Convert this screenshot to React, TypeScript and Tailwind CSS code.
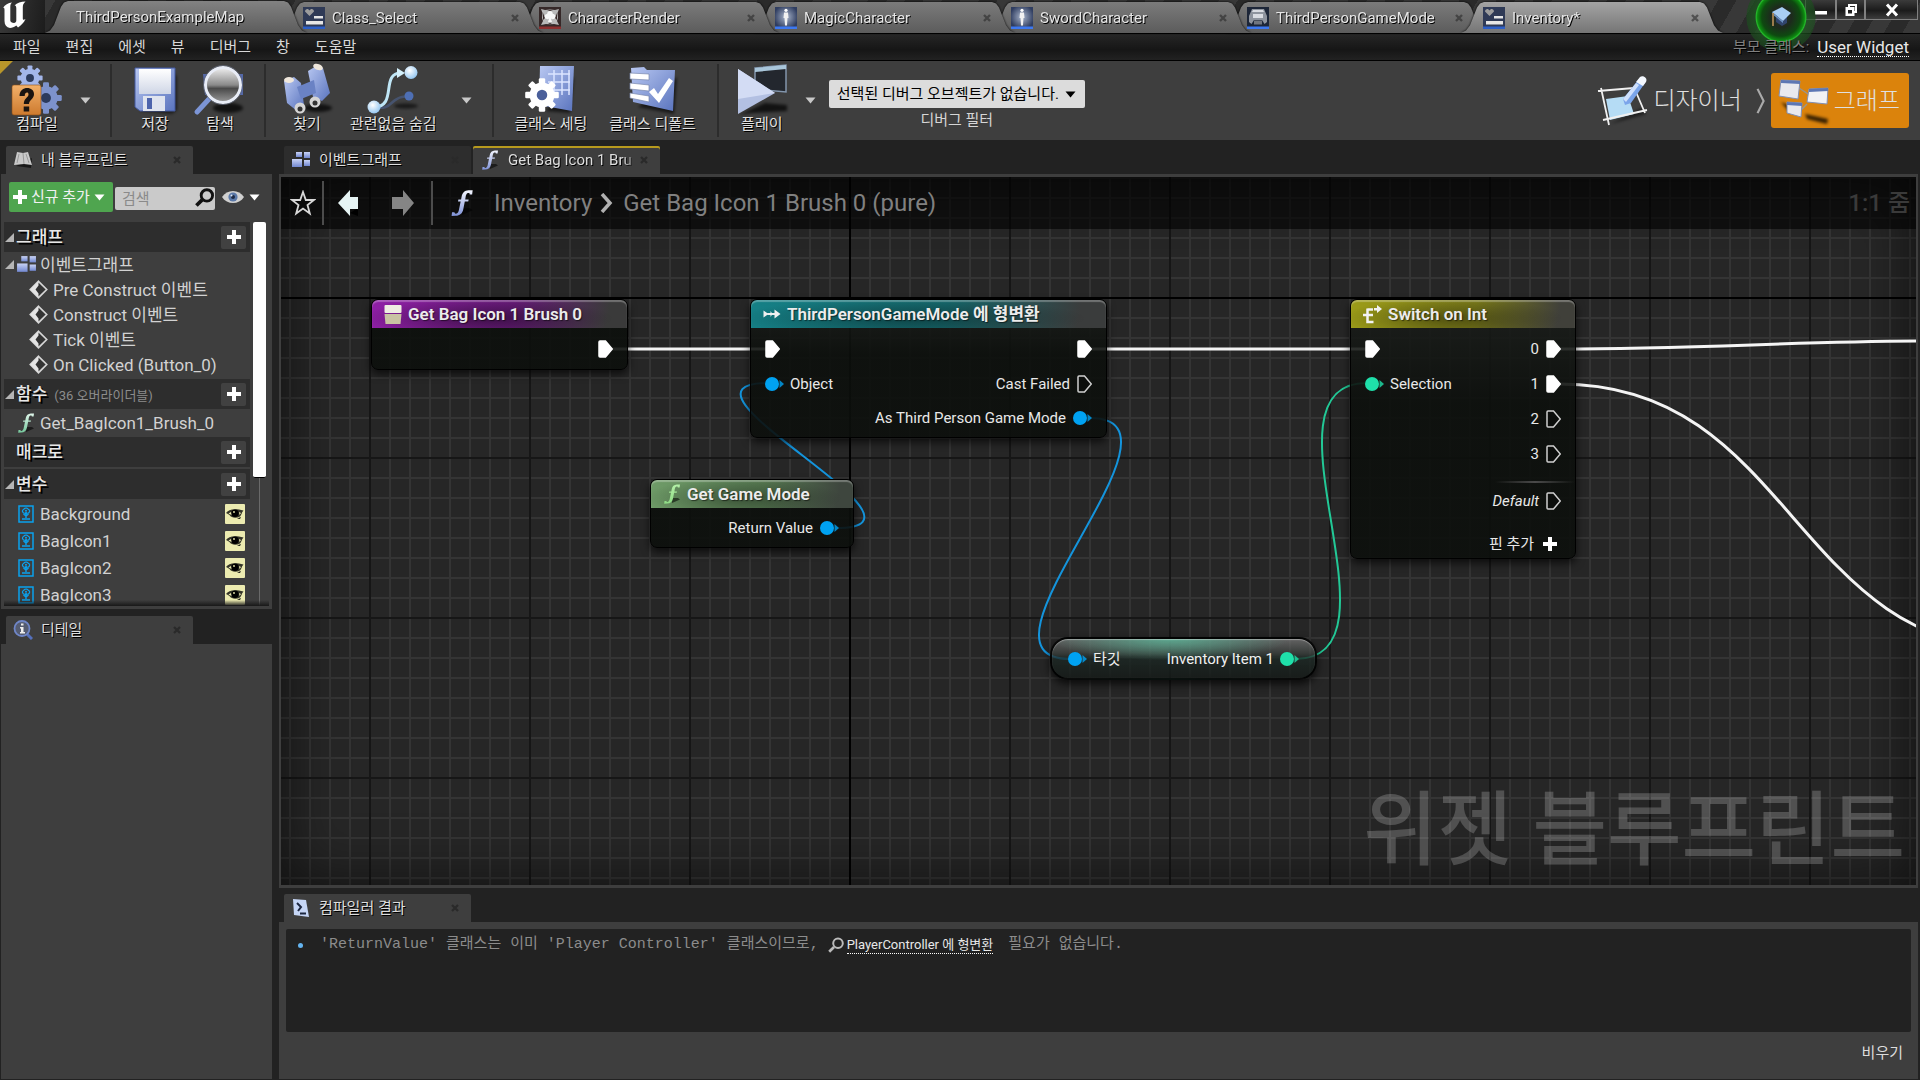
import React from "react";

type Kids = { children?: React.ReactNode };

const SHADOW = "[text-shadow:1px_1px_0_#000]";

/* ---------- small glyphs ---------- */

const CloseX = () => (
  <svg width="8" height="8" viewBox="0 0 8 8" fill="none" stroke="#2a2a2a" strokeWidth="2.4">
    <path d="M1 1L7 7M7 1L1 7" />
  </svg>
);

const Down = ({ className = "text-[#c8c8c8]" }: { className?: string }) => (
  <svg width="11" height="7" viewBox="0 0 11 7" className={`shrink-0 ${className}`}>
    <path d="M0.5 0.5H10.5L5.5 6.5Z" fill="currentColor" />
  </svg>
);

const Plus = ({ size = 14 }: { size?: number }) => (
  <svg width={size} height={size} viewBox="0 0 14 14" className="shrink-0" stroke="#fff" strokeWidth="4">
    <path d="M7 0V14M0 7H14" />
  </svg>
);

const Fold = () => (
  <svg width="9" height="9" viewBox="0 0 9 9" className="shrink-0">
    <path d="M9 0V9H0Z" fill="#b5b5b5" />
  </svg>
);

const FuncGlyph = ({ w = 18, h = 20, from = "#f4f6ff", to = "#7f92d8" }: { w?: number; h?: number; from?: string; to?: string }) => {
  const id = `fn${from.slice(1)}`;
  return (
    <svg width={w} height={h} viewBox="0 0 18 20" className="shrink-0 overflow-visible">
      <defs>
        <linearGradient id={id} x1="0" y1="0" x2="0" y2="1">
          <stop offset="0" stopColor={from} />
          <stop offset="1" stopColor={to} />
        </linearGradient>
      </defs>
      <path d="M9 19L17 15.500L15 14L9 14Z" fill="#000" opacity="0.55" />
      <path
        d="M17 0.500L16.600 3.600H14.800C14.800 2.400 14.200 2.300 13.400 2.500C12.300 2.800 12 4 11.700 5.500L11.400 7.400H14L13.700 8.800H11.100L10 14.500C9.300 18 7.300 19.500 4.300 19.600L1.200 19.700L1.500 17H3.300C3.500 18 4.100 18.200 4.900 17.900C6.100 17.500 6.500 16.200 6.800 14.600L8 8.800H6L6.300 7.400H8.300L8.700 5.300C9.300 2.400 11 0.600 13.800 0.500Z"
        fill={`url(#${id})`}
      />
    </svg>
  );
};

const EventGraphGlyph = ({ size = 20 }: { size?: number }) => (
  <svg width={size} height={size} viewBox="0 0 20 20" className="shrink-0">
    <defs>
      <linearGradient id="eg" x1="0" y1="0" x2="0" y2="1">
        <stop offset="0" stopColor="#c9d3f5" />
        <stop offset="1" stopColor="#7187d0" />
      </linearGradient>
    </defs>
    <rect x="5" y="2" width="6" height="5" fill="url(#eg)" />
    <rect x="13" y="2" width="6" height="6" fill="url(#eg)" />
    <rect x="1" y="9" width="10" height="8" fill="url(#eg)" />
    <rect x="13" y="10" width="6" height="6" fill="url(#eg)" />
  </svg>
);

const DiamondGlyph = () => (
  <svg width="19" height="19" viewBox="0 0 19 19" className="shrink-0">
    <path d="M9.500 1.300L17.700 9.500L9.500 17.700L1.300 9.500Z" fill="#333" stroke="#d4d4d4" strokeWidth="1.700" />
    <path d="M9.500 1.300L1.300 9.500L9.500 17.700L9.500 13.500L6.500 9.500L9.500 5.500Z" fill="#e4e4e4" />
  </svg>
);

const WidgetVarGlyph = () => (
  <svg width="16" height="18" viewBox="0 0 16 18" className="shrink-0" fill="none" stroke="#0aa2ee">
    <rect x="1" y="1" width="14" height="16" strokeWidth="1.500" />
    <path d="M8 7V13M4 14H12M8 11L5.500 9M8 11L10.500 9" strokeWidth="1.400" />
    <path d="M8 3.200C9 3 10 3.600 10.300 4.400C11.600 4.600 12 6 11.300 7C11 8.200 9.500 8.600 8.500 7.900C7.500 8.600 5.500 8.400 4.900 7.200C4 6.300 4.500 4.700 5.700 4.500C6 3.600 7 3.100 8 3.200Z" strokeWidth="1.200" />
    <circle cx="8" cy="5.800" r="1" fill="#0aa2ee" stroke="none" />
  </svg>
);

const EyeBadge = () => (
  <svg width="20" height="20" viewBox="0 0 20 20">
    <rect width="20" height="20" rx="1" fill="#ecebb0" />
    <path d="M1 9C3.500 5.500 9 4 18.500 6.500L17 8.500C17 9 16 11.500 15 12.500C11 14.500 6.500 14 4.500 11C3.500 10.500 2.500 9.500 1 9Z" fill="#151510" opacity="0.850" />
    <circle cx="10" cy="9.300" r="3.700" fill="#000" />
    <path d="M12 14.500L16 13L15 15Z" fill="#151510" />
    <path d="M3.500 9.500L6 8L6.500 11ZM14 8L16 9L14.500 11Z" fill="#ecebb0" />
    <circle cx="9" cy="8" r="0.900" fill="#ecebb0" />
  </svg>
);

const Lens = ({ size, color, w = 3 }: { size: number; color: string; w?: number }) => (
  <svg width={size} height={size} viewBox="0 0 20 20" fill="none" stroke={color} strokeWidth={w} className="shrink-0">
    <circle cx="12.500" cy="7.800" r="6" />
    <path d="M7.500 12.500L1.500 18.500" strokeWidth={w + 0.8} />
  </svg>
);

/* ---------- asset tab icons ---------- */

const WidgetAsset = () => (
  <svg width="22" height="22" viewBox="0 0 22 22" className="shrink-0">
    <rect width="22" height="22" fill="#2f3a56" />
    <rect y="19.500" width="22" height="2.500" fill="#2c5fc8" />
    <path d="M6.500 9L2 4.500C2 1.500 5.500 1 6.500 3.500C7.500 1 11 1.500 11 4.500Z" fill="#9d9d9d" />
    <path d="M11 9H20V11.500H11ZM3 14H20V17.500H3Z" fill="#e6e6e6" />
  </svg>
);
const RenderAsset = () => (
  <svg width="22" height="22" viewBox="0 0 22 22" className="shrink-0">
    <rect width="22" height="22" fill="#352828" />
    <rect y="19.500" width="22" height="2.500" fill="#8c2f2f" />
    <path d="M2 2L6 3L11 2.500L16 3L20 2L18.500 6L19 11L18 14L20 18L15 17L11 17.500L7 17L2 18L4 14L3 11L3.500 6Z" fill="#b9b9b9" />
    <path d="M4 6L6 11L4 13ZM18 6L16 11L18 13ZM8 3L11 4L14 3ZM8 17.500L11 16L14 17.500Z" fill="#3a2c2c" />
    <path d="M11 4C13 4 14 5.500 13.800 7C16 7 17 9 16 11C15 12.500 13 12.500 12 11.500L13 15H9L10 11.500C9 12.500 7 12.500 6 11C5 9 6 7 8.200 7C8 5.500 9 4 11 4Z" fill="#f7f7f7" />
  </svg>
);
const CharacterAsset = () => (
  <svg width="22" height="22" viewBox="0 0 22 22" className="shrink-0">
    <defs>
      <radialGradient id="ca" cx="0.500" cy="0.450" r="0.550">
        <stop offset="0" stopColor="#aab6cc" />
        <stop offset="1" stopColor="#2f3d60" />
      </radialGradient>
    </defs>
    <rect width="22" height="22" fill="url(#ca)" />
    <rect y="19.500" width="22" height="2.500" fill="#3d78f0" />
    <circle cx="11" cy="3.300" r="1.600" fill="#fff" />
    <path d="M9 5.500H13L13.500 11H12.500L12 18.500H10L9.500 11H8.500Z" fill="#f2f2f2" />
  </svg>
);
const GameModeAsset = () => (
  <svg width="22" height="22" viewBox="0 0 22 22" className="shrink-0">
    <rect width="22" height="22" fill="#1d2638" />
    <rect y="19.500" width="22" height="2.500" fill="#3d78f0" />
    <path d="M5 2H17L20 9V15L17.500 17L15 13H7L4.500 17L2 15V9Z" fill="#8e949e" />
    <path d="M6 3H16L17 5H5ZM6 7H16V11H6Z" fill="#d9dce2" />
    <rect x="7" y="13.500" width="8" height="4" fill="#70757e" />
  </svg>
);

/* ---------- title bar ---------- */

const titleTabs = [
  { label: "ThirdPersonExampleMap", icon: null, z: "z-[7]" },
  { label: "Class_Select", icon: <WidgetAsset />, z: "z-[6]" },
  { label: "CharacterRender", icon: <RenderAsset />, z: "z-[5]" },
  { label: "MagicCharacter", icon: <CharacterAsset />, z: "z-[4]" },
  { label: "SwordCharacter", icon: <CharacterAsset />, z: "z-[3]" },
  { label: "ThirdPersonGameMode", icon: <GameModeAsset />, z: "z-[2]" },
  { label: "Inventory*", icon: <WidgetAsset />, z: "z-[8]" },
];

const TAB_CLIP =
  "[clip-path:polygon(0_100%,5px_92%,9px_75%,16px_18%,19px_5%,23px_0,calc(100%-23px)_0,calc(100%-19px)_5%,calc(100%-16px)_18%,calc(100%-9px)_75%,calc(100%-5px)_92%,100%_100%)]";

const TitleBar = () => (
  <header className="flex h-[34px] shrink-0 items-end border-b border-black bg-[repeating-linear-gradient(120deg,#383838_0_16px,#2a2a2a_16px_32px)] pr-[2px]">
    <div className="flex h-full w-[45px] shrink-0 items-center bg-[linear-gradient(100deg,#3a3a3a,#1c1c1c)]">
      <svg width="28" height="28" viewBox="0 0 28 28" className="mb-1">
        <path
          d="M3 7C5 3.500 8 2 12 1.500C10.500 3 10.300 4 10.300 6V19.500C10.300 21 12 22 14 22C15.300 22 16.300 21 16.300 19.500V7.500C16.300 5 15.500 4.500 14.500 4.500C17 1.800 21 0.800 25.500 0.500C23.300 2.500 22.800 4 22.800 6.500V17.500C22.800 19 23.800 19.200 25.500 18C23.800 22 21.300 24 18 26.500L16.300 24.500C14.500 26 12 27 10 27C6.500 26.300 4.500 24 4.500 20V9C4.500 7 4 6.500 3 7Z"
          fill="#fff"
        />
      </svg>
    </div>
    <nav className="flex items-end">
      {titleTabs.map((t, i) => (
        <div key={t.label} className={`relative -mr-[26px] drop-shadow-[0_0_1px_#000] ${t.z}`}>
          <div
            className={`flex w-[262px] items-center pr-[24px] ${TAB_CLIP} ${
              i === 0
                ? "h-[32px] bg-[linear-gradient(#828282,#5c5c5c)] pl-[31px]"
                : i === 6
                  ? "h-[31px] bg-[linear-gradient(#a4a4a4,#757575)] pl-[22px]"
                  : "h-[31px] bg-[linear-gradient(#7b7b7b,#5c5c5c)] pl-[22px]"
            }`}
          >
            {t.icon}
            <button className={`flex-1 truncate text-left text-[15px] leading-5 text-[#e6e6e6] ${t.icon ? "pl-[7px]" : ""} ${SHADOW}`}>{t.label}</button>
            {i > 0 && (
              <button aria-label="탭 닫기" className="opacity-60">
                <CloseX />
              </button>
            )}
          </div>
        </div>
      ))}
    </nav>
    <div className="relative z-20 ml-auto flex h-full items-start">
      <button
        aria-label="튜토리얼"
        className="absolute -top-[18px] right-[102px] flex size-[70px] items-center justify-center rounded-full bg-[radial-gradient(circle_closest-side,#2b302b_0,#1d2a1d_30%,#0e4a10_55%,#0d8a10_67%,#26b82c_71%,#1d5a20b0_74%,#1c4d1ea0_98%,transparent)]"
      >
        <svg width="24" height="24" viewBox="0 0 24 24">
          <path d="M7 12L18 12V18L13 21L7 17Z" fill="#31456d" />
          <path d="M3 7L13 2L22 8L14 16Z" fill="#a8cdf3" />
          <path d="M3 7L14 16V18L3 9Z" fill="#6d93c4" />
          <path d="M4 8V21" stroke="#a98552" strokeWidth="1.800" />
        </svg>
      </button>
      {[
        { l: "최소화", w: "w-[31px]", p: <path d="M3 10H15V13.500H3Z" fill="#fff" /> },
        { l: "이전 크기로", w: "w-[29px]", p: <path d="M6 3H15V12H12.500V15H3.500V6H6ZM8 5V6H12.500V10H13V5ZM6 9V12.500H10V9Z" fill="#fff" fillRule="evenodd" /> },
        { l: "닫기", w: "w-[53px]", p: <path d="M4 3.500L14 14.500M14 3.500L4 14.500" stroke="#fff" strokeWidth="3" /> },
      ].map((b) => (
        <button key={b.l} aria-label={b.l} className={`flex h-[20px] items-center justify-center border border-t-0 border-[#808080] bg-[linear-gradient(#3b3b3b,#1b1b1b_55%,#3d3d3d)] ${b.w}`}>
          <svg width="18" height="18" viewBox="0 0 18 18">
            {b.p}
          </svg>
        </button>
      ))}
    </div>
  </header>
);

const MenuBar = () => (
  <div className="flex h-[27px] shrink-0 items-center border-b border-black bg-[linear-gradient(#262626,#161616_60%,#222)] pr-[11px] pl-[13px] text-[15px] leading-5 text-[#d8d8d8]">
    <nav className="flex gap-[25px]">
      {["파일", "편집", "에셋", "뷰", "디버그", "창", "도움말"].map((m) => (
        <button key={m}>{m}</button>
      ))}
    </nav>
    <div className="relative z-30 ml-auto flex items-center gap-2">
      <span className="text-[#808080] [text-shadow:1px_1px_0_#000]">부모 클래스:</span>
      <a href="#parent" className="border-b border-dotted border-white text-[17px] leading-[18px] text-[#e8e8e8]">
        User Widget
      </a>
    </div>
  </div>
);

/* ---------- toolbar ---------- */

const Defs = () => (
  <defs>
    <linearGradient id="bl" x1="0" y1="0" x2="1" y2="1">
      <stop offset="0" stopColor="#b9c8f2" />
      <stop offset="1" stopColor="#5a74be" />
    </linearGradient>
    <linearGradient id="wh" x1="0" y1="0" x2="0" y2="1">
      <stop offset="0" stopColor="#fff" />
      <stop offset="1" stopColor="#cfd6e6" />
    </linearGradient>
    <linearGradient id="or" x1="0" y1="0" x2="0" y2="1">
      <stop offset="0" stopColor="#f2b06a" />
      <stop offset="1" stopColor="#cd7a2e" />
    </linearGradient>
    <linearGradient id="gl" x1="0" y1="0" x2="0" y2="1">
      <stop offset="0" stopColor="#f0f0f0" />
      <stop offset="0.500" stopColor="#8a8a8a" />
      <stop offset="0.600" stopColor="#4a4a4a" />
      <stop offset="1" stopColor="#9a9a9a" />
    </linearGradient>
    <radialGradient id="ball" cx="0.400" cy="0.350" r="0.700">
      <stop offset="0" stopColor="#fff" />
      <stop offset="1" stopColor="#8fc4f0" />
    </radialGradient>
    <filter id="soft" x="-50%" y="-50%" width="200%" height="200%">
      <feGaussianBlur stdDeviation="1.500" />
    </filter>
  </defs>
);

const Gear = ({ x, y, r, fill, hole }: { x: number; y: number; r: number; fill: string; hole: string }) => (
  <g transform={`translate(${x} ${y}) scale(${r / 10})`}>
    {[0, 45, 90, 135].map((a) => (
      <rect key={a} x="-2" y="-10.500" width="4" height="21" rx="0.800" fill={fill} transform={`rotate(${a})`} />
    ))}
    <circle r="7.800" fill={fill} />
    <circle r="3.300" fill={hole} />
  </g>
);

const Icon48 = ({ children }: Kids) => (
  <svg width="50" height="50" viewBox="0 0 50 50" className="overflow-visible">
    <Defs />
    {children}
  </svg>
);

const CompileIcon = () => (
  <Icon48>
    <Gear x={18} y={13} r={12} fill="#a3b6ea" hole="#2c3a5c" />
    <Gear x={34} y={33} r={15} fill="#7d92cc" hole="#2c3a5c" />
    <rect x="0" y="20" width="29" height="30" rx="2" fill="url(#or)" stroke="#8a4d17" strokeWidth="0.600" />
    <path d="M7.500 31C7.500 20.500 22.500 21 22 29.500C21.800 34 17 35 17 39H11.800C11.800 33.500 16.500 32.500 16.500 29.500C16.500 26.500 12.700 27 12.700 31ZM11.700 41.500H17.200V46.500H11.700Z" fill="#1b1410" />
  </Icon48>
);
const SaveIcon = () => (
  <Icon48>
    <path d="M10 46L42 49L47 45V12L44 8Z" fill="#000" opacity="0.500" filter="url(#soft)" />
    <path d="M5 3H45V46H10L5 42Z" fill="url(#bl)" stroke="#4359a0" />
    <path d="M9 4H41V29H9Z" fill="url(#wh)" />
    <path d="M13 31H35V46H13Z" fill="#dfe4ef" />
    <path d="M17 33H22V44H17Z" fill="#4d64ac" />
  </Icon48>
);
const BrowseIcon = () => (
  <Icon48>
    <ellipse cx="33" cy="43" rx="15" ry="5" fill="#000" opacity="0.700" filter="url(#soft)" />
    <path d="M8 9H48V30H10Z" fill="#5468a8" />
    <path d="M14 34L2 47" stroke="#7c95d6" strokeWidth="5" strokeLinecap="round" />
    <circle cx="28" cy="20" r="17.500" fill="url(#gl)" stroke="#e8ecf6" strokeWidth="3" />
    <circle cx="28" cy="20" r="19.500" fill="none" stroke="#63697a" strokeWidth="0.800" />
  </Icon48>
);
const FindIcon = () => (
  <Icon48>
    <ellipse cx="36" cy="43" rx="14" ry="4" fill="#000" opacity="0.700" filter="url(#soft)" />
    <path d="M2 16L12 12L19 18L22 40L15 46L5 38Z" fill="url(#bl)" />
    <path d="M26 6L36 0L41 3L48 28L40 36L31 32Z" fill="url(#bl)" />
    <path d="M15 22L32 15L34 28L19 34Z" fill="#6a82c4" />
    <ellipse cx="7" cy="15" rx="5" ry="3" fill="#efe7dc" />
    <ellipse cx="36" cy="2" rx="5" ry="3" fill="#efe7dc" transform="rotate(20 36 2)" />
    <circle cx="18" cy="43" r="5.500" fill="#d5d5d5" />
    <circle cx="33" cy="37" r="5.500" fill="#d5d5d5" />
    <circle cx="18" cy="44" r="2.500" fill="#333" />
    <circle cx="33" cy="38" r="2.500" fill="#333" />
  </Icon48>
);
const HideIcon = () => (
  <Icon48>
    <ellipse cx="38" cy="41" rx="12" ry="2.500" fill="#000" opacity="0.600" filter="url(#soft)" />
    <path d="M6 42C24 46 22 34 34 32L40 31" fill="none" stroke="#46536e" strokeWidth="2.500" />
    <path d="M6 42C30 42 12 8 33 8" fill="none" stroke="#bfe6f6" strokeWidth="3" />
    <path d="M29 3L37 8L29 13Z" fill="#d3effa" />
    <circle cx="43" cy="7.500" r="6.500" fill="url(#ball)" />
    <circle cx="41" cy="31" r="4.500" fill="#4e6fb4" />
    <circle cx="6" cy="42" r="6.500" fill="url(#ball)" />
  </Icon48>
);
const ClassSettingsIcon = () => (
  <Icon48>
    <path d="M20 46L44 48L48 12Z" fill="#000" opacity="0.600" filter="url(#soft)" />
    <path d="M14 1H48L46 46L13 40Z" fill="url(#bl)" />
    <path d="M22 9H44M22 17H44M22 25H44M28 5V30M36 5V30M43 5V30" stroke="#dbe5ff" strokeWidth="1.500" />
    <Gear x={16} y={30} r={16} fill="#fff" hole="#4a5f9a" />
  </Icon48>
);
const ClassDefaultsIcon = () => (
  <Icon48>
    <path d="M10 42L46 49L49 12Z" fill="#000" opacity="0.600" filter="url(#soft)" />
    <path d="M3 3L16 2L19 5L47 5L45 46L5 37Z" fill="url(#bl)" />
    <path d="M2 8L21 9V15L2 14ZM2 18L21 20V26L2 24ZM2 28L21 31V37L2 33Z" fill="#fff" stroke="#7a88ae" strokeWidth="0.700" />
    <path d="M21 27L26 23L30 29L41 13L45 16L31 38Z" fill="#fff" />
  </Icon48>
);
const PlayIcon = () => (
  <Icon48>
    <path d="M2 50L28 38L50 40V46L14 48Z" fill="#000" opacity="0.700" filter="url(#soft)" />
    <path d="M18 3L49 0V27L18 24Z" fill="#23272e" stroke="#8295ac" strokeWidth="1.500" />
    <path d="M18 3L49 0V4L18 7Z" fill="#a9c6da" />
    <path d="M1 4L38 28L1 49Z" fill="#b3c0e2" />
    <path d="M1 4L38 28L1 34Z" fill="#d3dcf4" />
  </Icon48>
);
const DesignerIcon = () => (
  <Icon48>
    <path d="M12 48L48 38L44 32Z" fill="#000" opacity="0.500" filter="url(#soft)" />
    <path d="M8 23L30 20L36 38L12 44Z" fill="#b5dcf5" />
    <path d="M0 15L36 12M3 12L11 49M5 44L49 34M38 16L47 37" stroke="#f0f0f0" strokeWidth="1.800" fill="none" />
    <path d="M27 29L25 23L41 3L47 7L33 27Z" fill="#7ba5ea" />
    <path d="M38 6L42 1C45 -1 50 2 48 6L45 10Z" fill="#f4f8ff" />
    <path d="M25 23L38 7L41 9L28 26Z" fill="#cfe0fb" />
  </Icon48>
);
const GraphIcon = () => (
  <Icon48>
    <path d="M26 38L49 43L48 48L28 43ZM2 26L12 30V38Z" fill="#000" opacity="0.750" filter="url(#soft)" />
    <path d="M20 12L32 20M28 28L22 34" stroke="#9a958a" strokeWidth="1.500" />
    <path d="M2 4L21 5L19 23L0 20Z" fill="#e9e9ee" stroke="#8290b4" />
    <path d="M2 4L21 5V8L2 7Z" fill="#5d77b4" />
    <path d="M30 13L49 12L48 28L28 26Z" fill="#f2f2f4" stroke="#8290b4" />
    <path d="M30 13L49 12V15L30 16Z" fill="#5d77b4" />
    <path d="M8 26L23 27L22 41L8 37Z" fill="#e9e9ee" stroke="#8290b4" />
    <path d="M8 26L23 27V30L8 29Z" fill="#5d77b4" />
  </Icon48>
);

const Tool = ({ label, icon, className = "" }: { label: string; icon: React.ReactNode; className?: string }) => (
  <button className={`flex flex-col items-center pb-[3px] text-[15px] leading-[18px] whitespace-nowrap text-[#e0e0e0] ${SHADOW} ${className}`}>
    {icon}
    <span>{label}</span>
  </button>
);
const Group = ({ children, className = "" }: Kids & { className?: string }) => (
  <div className={`flex items-center border-r-2 border-[#2c2c2c] ${className}`}>{children}</div>
);

const Toolbar = () => (
  <div className="relative flex h-[79px] shrink-0 items-stretch bg-[#3e3e3e] py-[3px]">
    <svg width="13" height="13" viewBox="0 0 13 13" className="absolute top-0 left-0">
      <path d="M0 0H13L0 13Z" fill="#b8962a" />
    </svg>
    <Group className="gap-[18px] pr-[19px] pl-[12px]">
      <Tool label="컴파일" icon={<CompileIcon />} />
      <button aria-label="컴파일 옵션">
        <Down />
      </button>
    </Group>
    <Group className="gap-[15px] pr-[19px] pl-[18px]">
      <Tool label="저장" icon={<SaveIcon />} />
      <Tool label="탐색" icon={<BrowseIcon />} />
    </Group>
    <Group className="pr-[20px] pl-[16px]">
      <Tool label="찾기" icon={<FindIcon />} />
      <Tool label="관련없음 숨김" icon={<HideIcon />} className="ml-[18px]" />
      <button aria-label="숨김 옵션" className="ml-[24px]">
        <Down />
      </button>
    </Group>
    <Group className="gap-[22px] px-[21px]">
      <Tool label="클래스 세팅" icon={<ClassSettingsIcon />} />
      <Tool label="클래스 디폴트" icon={<ClassDefaultsIcon />} />
    </Group>
    <div className="flex items-center gap-[18px] pl-[18px]">
      <Tool label="플레이" icon={<PlayIcon />} />
      <button aria-label="플레이 옵션">
        <Down />
      </button>
    </div>
    <div className="ml-[13px] flex flex-col items-center justify-center gap-[2px] pt-[9px] text-[15px] leading-[20px]">
      <div className="relative">
        <select id="debug" className="h-7 w-[256px] appearance-none rounded-[2px] bg-[#dcdcdc] pl-[8px] text-black">
          <option>선택된 디버그 오브젝트가 없습니다.</option>
        </select>
        <Down className="pointer-events-none absolute top-[11px] right-[9px] text-black" />
      </div>
      <label htmlFor="debug" className="text-[#d6d6d6]">
        디버그 필터
      </label>
    </div>
    <div className="ml-auto flex items-center pr-[11px] text-[24px] leading-8 font-light text-[#e0e0e0]">
      <button className="flex items-center gap-[5px]">
        <DesignerIcon />
        디자이너
      </button>
      <svg width="12" height="26" viewBox="0 0 12 30" fill="none" stroke="#aaa" strokeWidth="2.500" className="mr-[4px] ml-[13px]">
        <path d="M2 1L9 15L2 29" />
      </svg>
      <button className="flex h-[55px] items-center gap-[5px] rounded-[3px] bg-[#db830c] pr-[9px] pl-[8px]">
        <GraphIcon />
        그래프
      </button>
    </div>
  </div>
);

/* ---------- docked tabs ---------- */

const DockTab = ({ icon, label, active = true, top = false }: { icon: React.ReactNode; label: string; active?: boolean; top?: boolean }) => (
  <div
    className={`flex h-[28px] w-[187px] items-center rounded-t-[2px] pr-[12px] pl-[7px] text-[15px] leading-5 ${active ? "bg-[#3e3e3e]" : "bg-[#2d2d2d]"} ${
      top ? "shadow-[inset_0_2px_0_#b79a1e]" : ""
    }`}
  >
    {icon}
    <button
      className={`mr-[2px] ml-[8px] flex-1 text-left whitespace-nowrap text-[#dedede] ${SHADOW} ${
        top ? "[mask-image:linear-gradient(90deg,#000_88%,transparent)]" : ""
      }`}
    >
      {label}
    </button>
    <button aria-label="탭 닫기">
      <CloseX />
    </button>
  </div>
);

const BookIcon = () => (
  <svg width="20" height="20" viewBox="0 0 20 20" className="shrink-0">
    <path d="M3 16L18 18L19 8Z" fill="#000" opacity="0.600" />
    <path d="M4 2L10 3L15 2L19 15L11 14L1 15Z" fill="#c9c9c9" />
    <path d="M10 3L11 14M6 4L4 13M13 4L16 13" stroke="#999" strokeWidth="1" />
  </svg>
);
const DetailIcon = () => (
  <svg width="20" height="20" viewBox="0 0 20 20" className="shrink-0">
    <path d="M13 13L19 19" stroke="#5570bb" strokeWidth="3" />
    <circle cx="9" cy="8.500" r="7.500" fill="#555c70" stroke="#6f86c8" strokeWidth="1.800" />
    <path d="M8 3.500H10.500V5.500H8ZM7 7H10.500V12H12V13.500H7V12H8V8.500H7Z" fill="#eee" />
  </svg>
);
const OutputIcon = () => (
  <svg width="20" height="20" viewBox="0 0 20 20" className="shrink-0">
    <path d="M2 1L15 2L18 19L3 17Z" fill="#c6d6f6" />
    <path d="M6 5L10 9L7 13" fill="none" stroke="#1c2740" strokeWidth="2" />
    <path d="M9 15.500H15" stroke="#1c2740" strokeWidth="2" />
  </svg>
);

/* ---------- left panel ---------- */

const Section = ({ label, note, fold = true, className = "" }: { label: string; note?: string; fold?: boolean; className?: string }) => (
  <div className={`flex h-[30px] items-center bg-[#2d2d2d] pr-[4px] ${className}`}>
    <span className="flex w-[12px] pl-[1px]">{fold && <Fold />}</span>
    <span className="leading-6 font-medium text-[#e8e8e8] [text-shadow:2px_2px_0_#000]">{label}</span>
    {note && <span className="mt-[3px] ml-[7px] text-[13px] leading-6 text-[#8c8c8c]">{note}</span>}
    <button aria-label={`${label} 추가`} className="ml-auto flex h-[23px] w-[25px] items-center justify-center rounded-[2px] bg-[#414141]">
      <Plus />
    </button>
  </div>
);

const LeftPanel = () => (
  <aside className="flex w-[272px] shrink-0 flex-col pt-[6px] pl-px text-[17px] text-[#d2d2d2]">
    <div className="pl-[5px]">
      <DockTab icon={<BookIcon />} label="내 블루프린트" />
    </div>
    <section className="flex h-[435px] flex-col bg-[#3e3e3e] pt-[8px] pb-[3px]">
      <div className="flex items-center pl-[8px]">
        <button className="flex h-[30px] w-[104px] items-center gap-[4px] rounded-[2px] bg-[#4fa54f] pl-[4px] text-[15px] leading-5 text-[#f2f2f2]">
          <Plus />
          신규 추가
          <Down className="text-white" />
        </button>
        <div className="relative ml-[2px] h-[23px] w-[100px]">
          <input aria-label="검색" placeholder="검색" className="h-full w-full rounded-[2px] bg-[#cacaca] pr-[24px] pl-[7px] text-[15px] text-black placeholder:text-[#8a8a8a]" />
          <span className="pointer-events-none absolute top-[2px] right-[1px]">
            <Lens size={19} color="#111" />
          </span>
        </div>
        <button aria-label="보기 옵션" className="ml-[7px] flex items-center gap-[5px]">
          <svg width="22" height="14" viewBox="0 0 22 14">
            <path d="M0 7C5 -1 17 -1 22 7C17 15 5 15 0 7Z" fill="#d0d0d0" />
            <circle cx="11" cy="7" r="4.600" fill="#5a78a8" />
            <circle cx="11" cy="7" r="2" fill="#1d2a44" />
            <circle cx="9.500" cy="5.500" r="1" fill="#dfe8f6" />
          </svg>
          <Down className="text-white" />
        </button>
      </div>
      <div className="relative mt-[10px] flex min-h-0 flex-1 overflow-hidden">
        <div className="ml-[3px] w-[246px] shrink-0">
          <Section label="그래프" />
          <div className="flex h-[25px] items-center pl-px leading-6">
            <Fold />
            <span className="ml-[2px] flex">
              <EventGraphGlyph size={21} />
            </span>
            <button className="ml-[3px]">이벤트그래프</button>
          </div>
          {["Pre Construct 이벤트", "Construct 이벤트", "Tick 이벤트", "On Clicked (Button_0)"].map((t) => (
            <button key={t} className="flex h-[25px] w-full items-center gap-[5px] pl-[25px] leading-6">
              <DiamondGlyph />
              {t}
            </button>
          ))}
          <Section label="함수" note="(36 오버라이더블)" className="mt-[2px]" />
          <button className="flex h-[28px] w-full items-center gap-[5px] pl-[13px] leading-6">
            <FuncGlyph from="#dff5ea" to="#74c79b" />
            Get_BagIcon1_Brush_0
          </button>
          <Section label="매크로" fold={false} />
          <Section label="변수" className="mt-[2px] mb-px" />
          {["Background", "BagIcon1", "BagIcon2", "BagIcon3"].map((t) => (
            <div key={t} className="flex h-[27px] items-center pr-[5px] pl-[14px]">
              <WidgetVarGlyph />
              <button className="ml-[6px] leading-6">{t}</button>
              <button aria-label={`${t} 공개`} className="ml-auto">
                <EyeBadge />
              </button>
            </div>
          ))}
        </div>
        <div className="ml-[3px] flex w-[13px] flex-col items-center">
          <div className="h-[256px] w-full shrink-0 rounded-[2px] border-b border-black bg-white" />
          <div className="w-px flex-1 bg-[#6a6a6a]" />
        </div>
        <div className="pointer-events-none absolute inset-x-[3px] bottom-0 h-[6px] bg-[linear-gradient(transparent,#181818)]" />
      </div>
    </section>
    <div className="mt-[7px] pl-[5px]">
      <DockTab icon={<DetailIcon />} label="디테일" />
    </div>
    <section className="mb-px flex-1 bg-[#3e3e3e]" />
  </aside>
);

/* ---------- graph nodes ---------- */

const Exec = ({ on = false }: { on?: boolean }) => (
  <svg width="15" height="18" viewBox="0 0 15 18" className="shrink-0">
    <path d="M1 2C1 1.200 1.500 1 2 1H7.500L14.300 9L7.500 17H2C1.500 17 1 16.800 1 16Z" fill={on ? "#fff" : "#0c0e0c"} stroke={on ? "#fff" : "#d0d0d0"} strokeWidth="1.500" />
  </svg>
);
const Dot = ({ color }: { color: string }) => (
  <svg width="19" height="14" viewBox="0 0 19 14" className="shrink-0">
    <circle cx="7" cy="7" r="7" fill={color} />
    <path d="M14.500 3L19 7L14.500 11Z" fill={color} opacity="0.800" />
  </svg>
);
const BLUE = "#00a2f2";
const GREEN = "#1fe0aa";

const Node = ({ pos, head, icon, title, children }: Kids & { pos: string; head: string; icon: React.ReactNode; title: string }) => (
  <article className={`absolute rounded-[7px] border border-black bg-[linear-gradient(#1b1e1be0,#0c0f0ce6_40%)] shadow-[0_4px_8px_#000a] ${pos}`}>
    <h3
      className={`flex h-[28px] items-center gap-[6px] rounded-t-[6px] pl-[12px] text-[17px] leading-6 font-semibold text-[#ececec] shadow-[inset_0_2px_1px_#ffffff48] [text-shadow:1px_1px_1px_#0008] ${head}`}
    >
      {icon}
      {title}
    </h3>
    <div className="pt-[3px] text-[15px] leading-5 text-[#e8e8e8]">{children}</div>
  </article>
);

const Row = ({ left, right, className = "h-[35px]" }: { left?: React.ReactNode; right?: React.ReactNode; className?: string }) => (
  <div className={`flex items-center justify-between px-[14px] ${className}`}>
    <div className="flex items-center gap-[6px]">{left}</div>
    <div className="flex items-center gap-[7px]">{right}</div>
  </div>
);

const Wires = () => (
  <svg className="absolute top-0 left-0 h-full w-full" fill="none">
    <g transform="translate(-281 -177)" strokeWidth="3" stroke="#f4f4f4">
      <path d="M612 349H766M1090 349H1366M1560 349C1700 349 1800 341 1930 341" />
      <path d="M1560 384C1793 384 1793 650 2023 650" />
      <g strokeWidth="2" stroke="#1494dc">
        <path d="M836 528C956 528 649 383 769 383" />
        <path d="M1090 418C1205 418 955 659 1070 659" />
        <path d="M1295 659C1412 659 1250 383 1367 383" stroke="#22c896" />
      </g>
    </g>
  </svg>
);

const GRID =
  "bg-[#262626] bg-[linear-gradient(90deg,#161616_2px,transparent_2px),linear-gradient(#161616_2px,transparent_2px),linear-gradient(90deg,#343434_2px,transparent_2px),linear-gradient(#343434_2px,transparent_2px)] bg-[size:160px_160px,160px_160px,20px_20px,20px_20px] bg-[position:88px_120px,88px_120px,88px_120px,88px_120px]";

const Graph = () => (
  <div className={`relative flex-1 overflow-hidden ${GRID}`}>
    <div className="absolute top-0 bottom-0 left-[568px] w-[2px] bg-black" />
    <div className="absolute inset-x-0 top-[120px] h-[2px] bg-black" />
    <div className="absolute inset-0 shadow-[inset_0_0_60px_#000000a0]" />
    <div className="absolute right-[11px] bottom-[9px] text-[81px] leading-[90px] font-medium text-white/20">위젯 블루프린트</div>
    <Wires />

    <Node
      pos="left-[90px] top-[122px] w-[257px] h-[71px]"
      head="bg-[radial-gradient(ellipse_50%_70%_at_45%_65%,#00000070,transparent),linear-gradient(100deg,#8f1fa6,#6a1c7c_55%,#3a3a3a_92%)]"
      title="Get Bag Icon 1 Brush 0"
      icon={
        <svg width="18" height="19" viewBox="0 0 17 19" className="shrink-0">
          <rect width="17" height="8" rx="1" fill="#efede2" />
          <path d="M0 9H17L16 19H1Z" fill="#c9c3a3" />
        </svg>
      }
    >
      <Row right={<Exec on />} />
    </Node>

    <Node
      pos="left-[469px] top-[122px] w-[357px] h-[139px]"
      head="bg-[radial-gradient(ellipse_50%_70%_at_45%_65%,#00000060,transparent),linear-gradient(100deg,#158086,#176a6e_55%,#3a3c3c_92%)]"
      title="ThirdPersonGameMode 에 형변환"
      icon={
        <svg width="18" height="12" viewBox="0 0 17 12" className="shrink-0">
          <path d="M0 2.500L5 6L0 9.500ZM4 5H12V7H4ZM7 3L9 6L7 9ZM11 1.500L17 6L11 10.500Z" fill="#f0f0f0" />
        </svg>
      }
    >
      <Row left={<Exec on />} right={<Exec on />} />
      <Row left={<><Dot color={BLUE} />Object</>} right={<>Cast Failed<Exec /></>} />
      <Row className="h-[34px]" right={<>As Third Person Game Mode<Dot color={BLUE} /></>} />
    </Node>

    <Node
      pos="left-[369px] top-[302px] w-[204px] h-[69px]"
      head="bg-[radial-gradient(ellipse_50%_70%_at_45%_65%,#00000058,transparent),linear-gradient(100deg,#6f9c68,#577a52_55%,#3e463e_92%)]"
      title="Get Game Mode"
      icon={<FuncGlyph from="#b4f0a8" to="#8edb84" w={18} />}
    >
      <Row className="h-[33px]" right={<>Return Value<Dot color={BLUE} /></>} />
    </Node>

    <Node
      pos="left-[1069px] top-[122px] w-[226px] h-[260px]"
      head="bg-[radial-gradient(ellipse_50%_70%_at_45%_65%,#00000060,transparent),linear-gradient(100deg,#9c9c18,#7c7c1a_55%,#40403a_92%)]"
      title="Switch on Int"
      icon={
        <svg width="19" height="19" viewBox="0 0 19 19" className="shrink-0">
          <path d="M0 10H10M4.500 3.500V17H10.500M4.500 4.500H10" stroke="#f2f2f2" strokeWidth="2.500" fill="none" />
          <path d="M11 3H14V0L19 4L14 8V5.500H11Z" fill="#f2f2f2" />
        </svg>
      }
    >
      <Row left={<Exec on />} right={<>0<Exec on /></>} />
      <Row left={<><Dot color={GREEN} />Selection</>} right={<>1<Exec on /></>} />
      <Row right={<>2<Exec /></>} />
      <Row right={<>3<Exec /></>} />
      <div className="mt-[10px] ml-auto h-[2px] w-[80px] bg-[linear-gradient(90deg,transparent,#4a4a4a,transparent)]" />
      <Row right={<><span className="italic">Default</span><Exec /></>} />
      <Row className="mt-[11px] h-[30px]" right={<button className="flex items-center gap-[9px] pr-[4px]">핀 추가<Plus /></button>} />
    </Node>

    <article className="absolute top-[460px] left-[769px] flex h-[43px] w-[267px] items-center rounded-[18px] border-2 border-black/90 bg-[radial-gradient(ellipse_45%_55%_at_45%_0,#5ab698d0,transparent),linear-gradient(#777777c0,#3a403dc0_38%,#1b2723c8_50%,#151a18d0)] px-[16px] text-[15px] leading-5 text-[#f0f0f0] shadow-[0_4px_8px_#000b,inset_0_1px_1px_#ffffff60]">
      <Dot color={BLUE} />
      <span className="ml-[6px]">타깃</span>
      <span className="mr-[6px] ml-auto">Inventory Item 1</span>
      <Dot color={GREEN} />
    </article>

    <div className="absolute inset-x-0 top-0 flex h-[52px] items-center bg-black/60 text-[24px] leading-8 text-[#808080]">
      <button aria-label="즐겨찾기" className="ml-[9px]">
        <svg width="26" height="26" viewBox="0 0 26 26" fill="none" stroke="#d8d8d8" strokeWidth="1.800">
          <path d="M13 2L15.800 10H24L17.500 15L19.800 23.500L13 18.500L6.200 23.500L8.500 15L2 10H10.200Z" />
        </svg>
      </button>
      <div className="ml-[6px] h-[44px] w-[2px] bg-[#4c4c4c]" />
      <button aria-label="뒤로" className="ml-[14px]">
        <svg width="22" height="28" viewBox="0 0 22 28">
          <path d="M12 24L20 19V27Z" fill="#000" />
          <path d="M0 14L12 1V8H20V20H12V27Z" fill="#e6f4f4" />
        </svg>
      </button>
      <button aria-label="앞으로" className="ml-[32px]">
        <svg width="22" height="28" viewBox="0 0 22 28">
          <path d="M22 14L11 1V8H0V20H11V27Z" fill="#858585" />
        </svg>
      </button>
      <div className="mx-[17px] h-[44px] w-[2px] bg-[#4c4c4c]" />
      <FuncGlyph w={24} h={30} />
      <button className="ml-[20px]">Inventory</button>
      <svg width="13" height="20" viewBox="0 0 13 20" fill="none" stroke="#b0b0b0" strokeWidth="3.500" className="mr-[10px] ml-[8px]">
        <path d="M2 1L10 10L2 19" />
      </svg>
      <button>Get Bag Icon 1 Brush 0 (pure)</button>
      <span className="mr-[6px] ml-auto font-medium text-[#3a3a3a]">1:1 줌</span>
    </div>
  </div>
);

const Results = () => (
  <section className="mb-px flex h-[157px] shrink-0 flex-col bg-[#3e3e3e] px-[7px] pt-[7px]">
    <div className="h-[103px] rounded-[2px] bg-[#222] pt-[6px] pl-[12px]">
      <p className="flex items-center font-['Liberation_Mono','Noto_Sans_CJK_KR',monospace] text-[15px] leading-5 whitespace-pre text-[#8c8c8c]">
        <span className="mr-[17px] size-[5px] rounded-full bg-[#64b4f0]" />
        {"'ReturnValue' 클래스는 이미 'Player Controller' 클래스이므로, "}
        <Lens size={16} color="#bbb" w={2.5} />
        <a href="#cast" className="mr-[15px] ml-[3px] border-b border-dotted border-white font-['Roboto','Noto_Sans_CJK_KR',sans-serif] text-[13px] leading-4 text-[#e8e8e8]">
          PlayerController 에 형변환
        </a>
        필요가 없습니다.
      </p>
    </div>
    <button className="mt-[11px] mr-[8px] self-end text-[15px] leading-5 text-[#dcdcdc]">비우기</button>
  </section>
);

export default function App() {
  return (
    <div className="flex h-screen flex-col overflow-hidden bg-[#222] font-['Roboto','Noto_Sans_CJK_KR',sans-serif]">
      <TitleBar />
      <MenuBar />
      <Toolbar />
      <div className="flex min-h-0 flex-1">
        <LeftPanel />
        <main className="mr-[2px] ml-[7px] flex min-w-0 flex-1 flex-col pt-[6px]">
          <div className="flex gap-[2px] pl-[5px]">
            <DockTab icon={<EventGraphGlyph />} label="이벤트그래프" active={false} />
            <DockTab icon={<FuncGlyph w={20} />} label="Get Bag Icon 1 Bru" top />
          </div>
          <section className="flex min-h-0 flex-1 flex-col border-x-2 border-y-[3px] border-[#3e3e3e]">
            <Graph />
          </section>
          <div className="pt-[6px] pl-[5px]">
            <DockTab icon={<OutputIcon />} label="컴파일러 결과" />
          </div>
          <Results />
        </main>
      </div>
    </div>
  );
}
